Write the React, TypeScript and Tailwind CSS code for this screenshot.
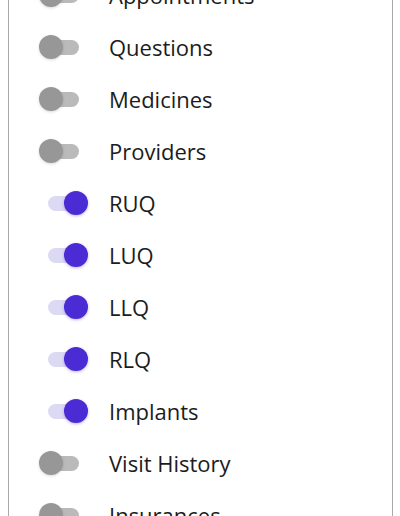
import React from "react";

const items: { label: string; on: boolean }[] = [
  { label: "Appointments", on: false },
  { label: "Questions", on: false },
  { label: "Medicines", on: false },
  { label: "Providers", on: false },
  { label: "RUQ", on: true },
  { label: "LUQ", on: true },
  { label: "LLQ", on: true },
  { label: "RLQ", on: true },
  { label: "Implants", on: true },
  { label: "Visit History", on: false },
  { label: "Insurances", on: false },
];

function Toggle({ on }: { on: boolean }) {
  return (
    <div className="relative h-[24px] w-[49px] shrink-0">
      <div
        className={
          "absolute left-[9px] top-[4.5px] h-[15px] w-[31px] rounded-full " +
          (on ? "bg-[#dcd9f3]" : "bg-[#bababa]")
        }
      />
      <div
        className={
          "absolute top-0 h-[24px] w-[24px] rounded-full " +
          (on
            ? "left-[25px] bg-[#4b2bd4] shadow-[0_1px_3px_rgba(75,43,212,0.35)]"
            : "left-0 bg-[#979797] shadow-[0_1px_3px_rgba(0,0,0,0.15)]")
        }
      />
    </div>
  );
}

export default function App() {
  return (
    <div className="h-[516px] w-[400px] overflow-hidden bg-white">
      <div className="ml-[8px] h-[600px] w-[385px] border-x border-[#a9a9a9]">
        <div className="mt-[-31px] flex flex-col">
          {items.map((it) => (
            <div key={it.label} className="flex h-[52px] items-center pl-[30px]">
              <Toggle on={it.on} />
              <span
                className="ml-[21px] text-[22px] leading-none text-[#1c1c1c]"
                style={{ fontFamily: '"Open Sans", "Noto Sans", sans-serif' }}
              >
                {it.label}
              </span>
            </div>
          ))}
        </div>
      </div>
    </div>
  );
}
